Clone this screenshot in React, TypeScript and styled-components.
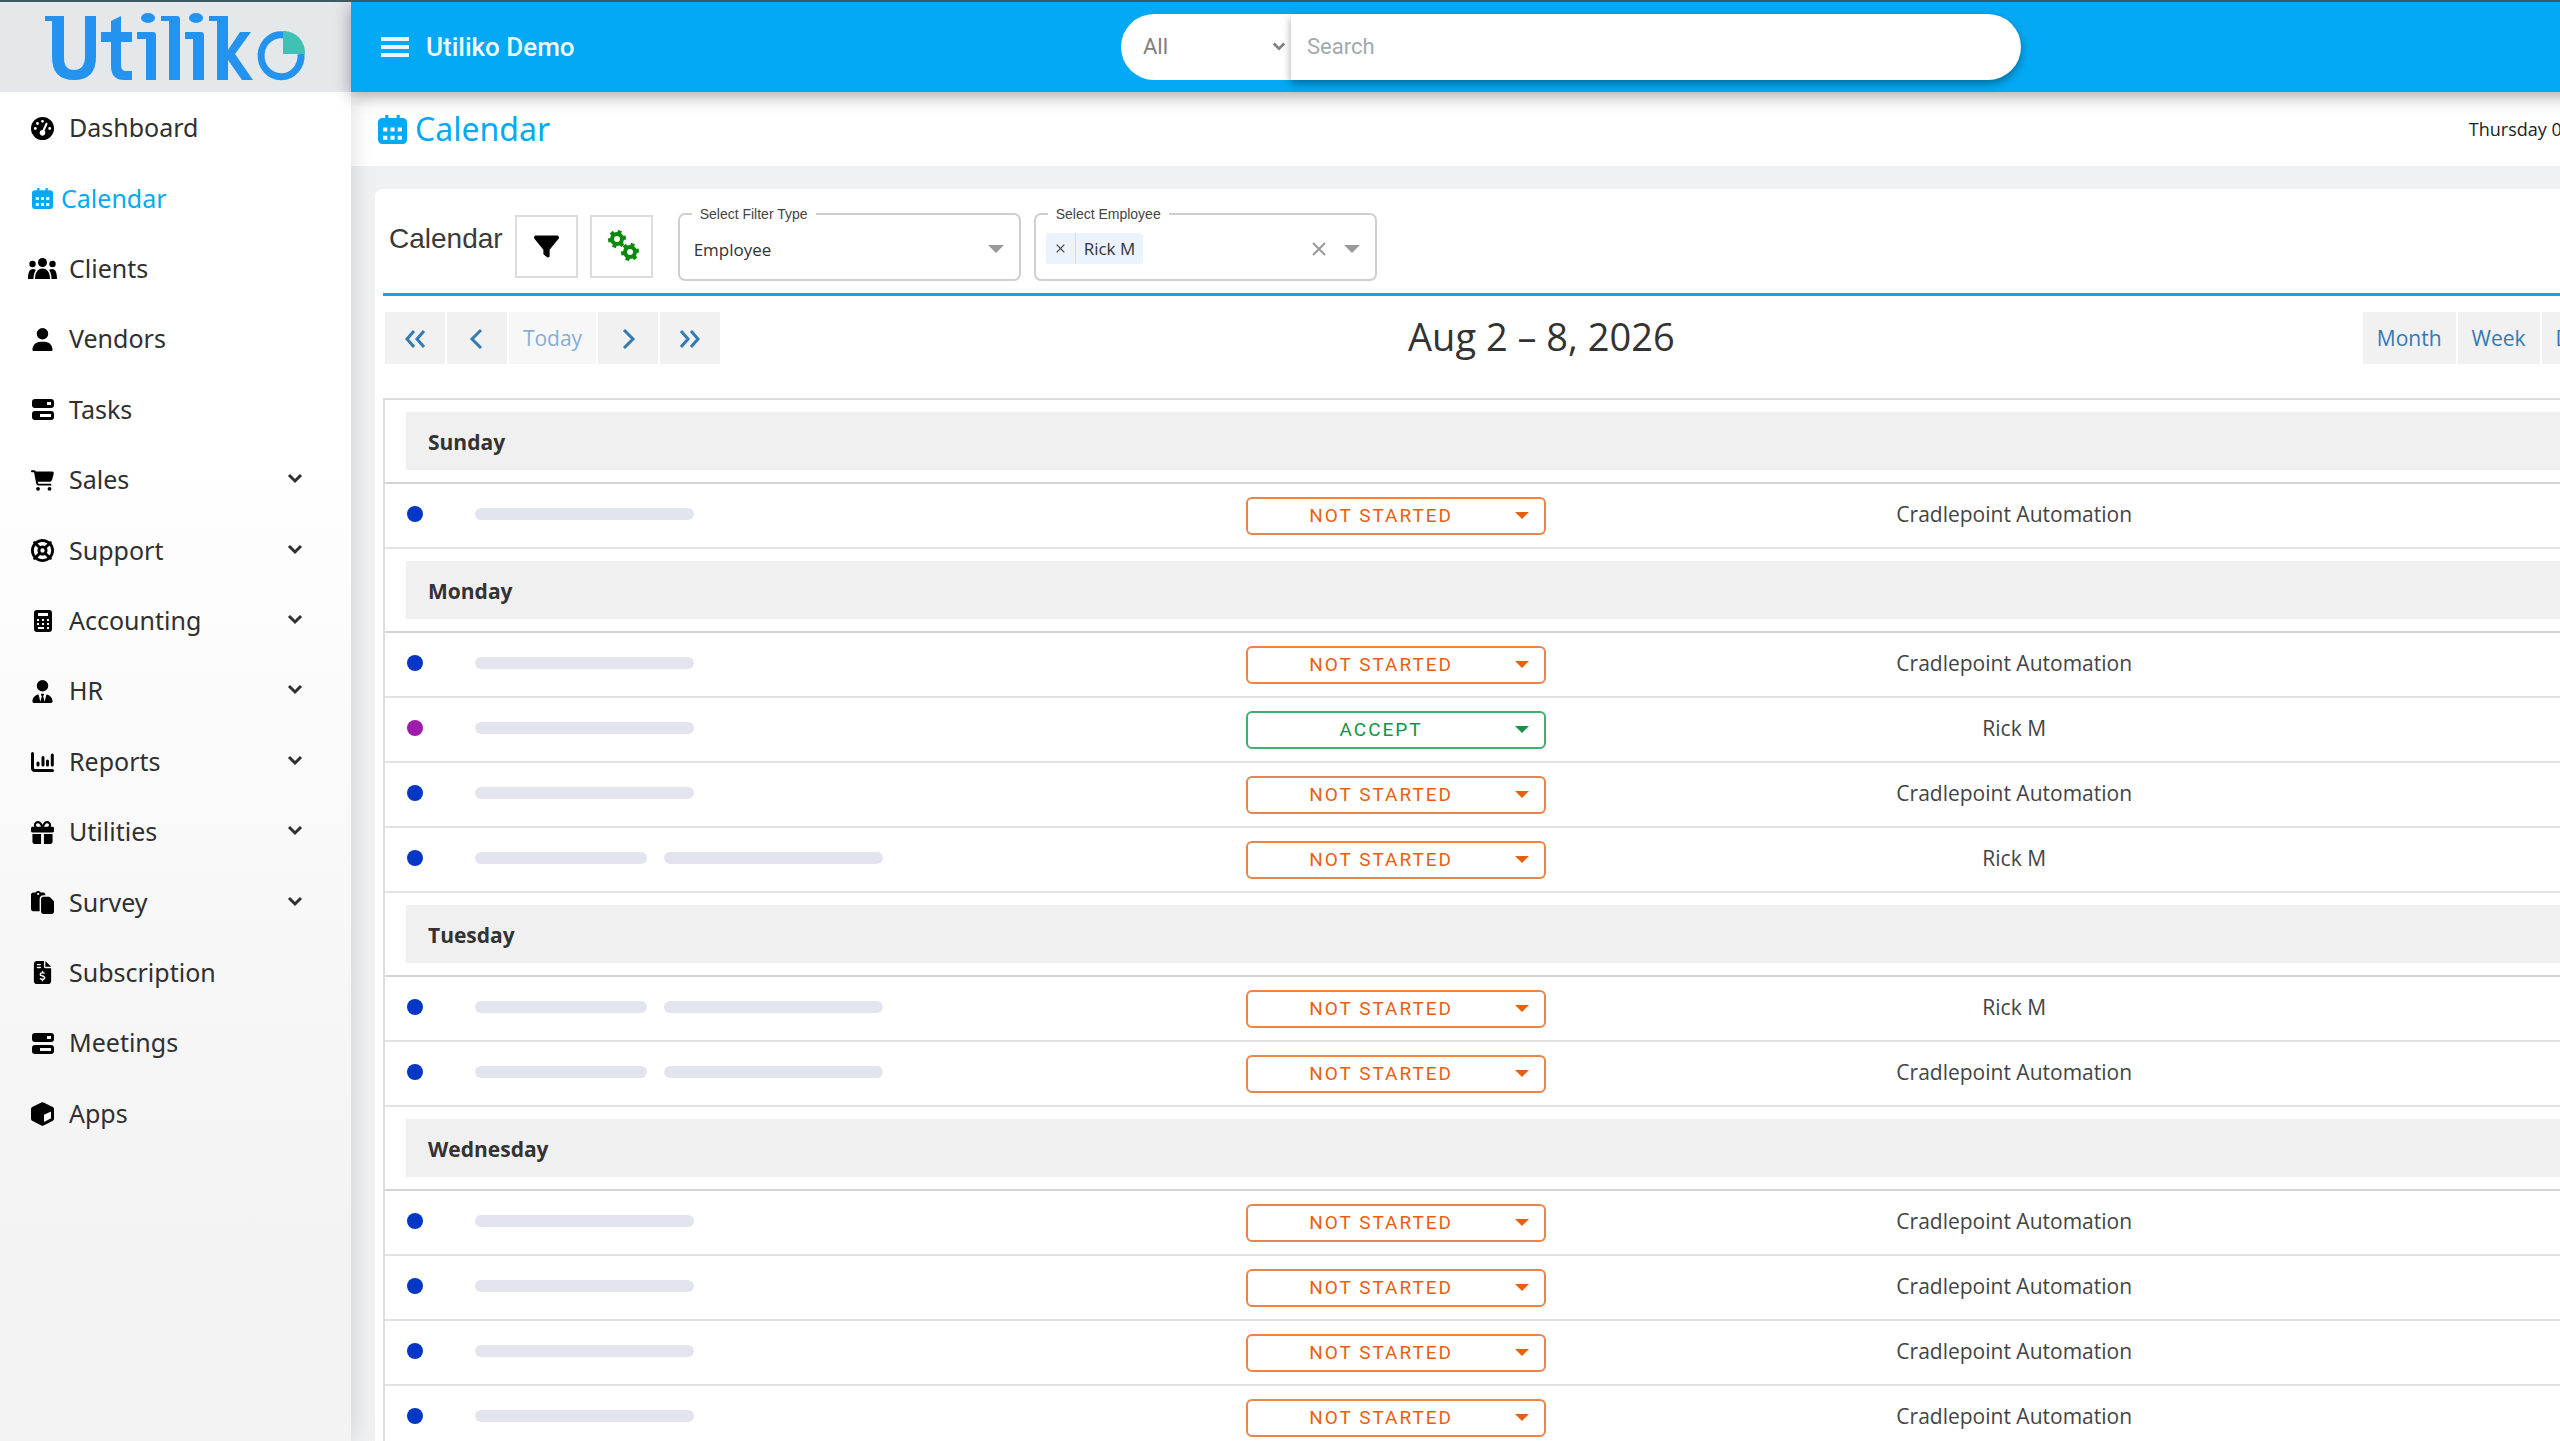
import React from "react";
import styled, { createGlobalStyle, css } from "styled-components";
import {
  FaGaugeHigh,
  FaUser,
  FaCartShopping,
  FaLifeRing,
  FaUserTie,
  FaGift,
  FaPaste,
  FaFileInvoiceDollar,
  FaFilter,
} from "react-icons/fa6";
import type { IconType } from "react-icons";

const uiFont = '"Noto Sans", "Open Sans", sans-serif';
const bodyFont = '"Open Sans", "Noto Sans", sans-serif';
const robotoFont = 'Roboto, "Liberation Sans", sans-serif';
const arialFont = '"Liberation Sans", Arial, sans-serif';
const blue = "#03a9f4";

const GlobalStyle = createGlobalStyle`
  *, *::before, *::after { box-sizing: border-box; }
  body { margin: 0; background: #eff1f3; overflow: hidden; }
  button, input, select { font: inherit; color: inherit; margin: 0; }
  button { cursor: pointer; }
`;

const Shell = styled.div`
  display: flex;
  height: 100vh;
  overflow: hidden;
  border-top: 2px solid #3c5c62;
  font-family: ${bodyFont};
  color: #333;
`;

const Sidebar = styled.aside`
  flex: 0 0 351px;
  display: flex;
  flex-direction: column;
  background: linear-gradient(#fff 30%, #f3f3f3 85%);
  box-shadow: 0 0 24px rgba(0, 0, 0, 0.14);
  z-index: 1;
`;

const Brand = styled.a`
  display: flex;
  align-items: center;
  height: 90px;
  padding-left: 44px;
  background: #e5e8eb;
`;

const MenuList = styled.ul`
  display: grid;
  grid-auto-rows: 1fr;
  height: 1056px;
  list-style: none;
  margin: 0;
  padding: 0;
`;

const MenuLink = styled.a<{ $active?: boolean }>`
  display: grid;
  grid-template-columns: ${(p) => (p.$active ? "25px" : "25px")} 1fr 24px;
  column-gap: ${(p) => (p.$active ? "6px" : "14px")};
  align-items: center;
  height: 100%;
  padding: 0 40px 0 30px;
  font: 400 25px/34px ${uiFont};
  color: ${(p) => (p.$active ? blue : "#303030")};
  text-decoration: none;
`;

const MenuIcon = styled.span<{ $active?: boolean }>`
  display: flex;
  justify-content: center;
  padding-top: 2px;
  font-size: ${(p) => (p.$active ? "21px" : "23px")};
  color: ${(p) => (p.$active ? blue : "#000")};
  svg {
    flex: none;
  }
`;

const Main = styled.main`
  flex: 0 0 calc(100% - 283px);
  display: flex;
  flex-direction: column;
`;

const TopBar = styled.header`
  position: relative;
  z-index: 1;
  flex: 0 0 90px;
  display: flex;
  align-items: center;
  padding-left: 30px;
  background: ${blue};
  color: #fff;
  box-shadow: 0 4px 16px rgba(0, 0, 0, 0.35);
`;

const MenuToggle = styled.button`
  display: flex;
  padding: 0;
  border: 0;
  background: none;
  color: #e8f7ff;
`;

const Company = styled.div`
  flex: 0 0 712px;
  padding-left: 17px;
  font: 500 26px/34px ${robotoFont};
  color: #eefaff;
`;

const SearchBox = styled.form`
  display: flex;
  width: 900px;
  height: 66px;
  font: 400 22px/28px ${robotoFont};
`;

const ScopeWrap = styled.div`
  position: relative;
  flex: 0 0 170px;
  display: flex;
  align-items: center;
  background: #fff;
  border-radius: 33px 0 0 33px;
  color: #808080;
  svg {
    position: absolute;
    right: 5px;
    pointer-events: none;
  }
`;

const Scope = styled.select`
  appearance: none;
  width: 100%;
  height: 100%;
  padding: 0 22px;
  border: 0;
  background: none;
`;

const SearchInput = styled.input`
  position: relative;
  flex: 1;
  min-width: 0;
  padding: 0 16px;
  border: 0;
  border-radius: 0 33px 33px 0;
  background: #fff;
  box-shadow: 0 4px 8px rgba(0, 0, 0, 0.35);
  &::placeholder {
    color: #a3a9ae;
    opacity: 1;
  }
`;

const TitleBar = styled.div`
  flex: 0 0 74px;
  display: flex;
  align-items: center;
  justify-content: space-between;
  padding: 0 56px 0 27px;
  background: #fff;
`;

const PageTitle = styled.h1`
  display: flex;
  align-items: center;
  gap: 8px;
  margin: 0;
  font: 400 32px/40px ${uiFont};
  color: ${blue};
`;

const Today = styled.time`
  font: 400 18px/28px ${bodyFont};
  color: #222;
`;

const Card = styled.section`
  flex: 1;
  margin: 23px 0 0 24px;
  padding: 23px 0 0 8px;
  border-radius: 8px 0 0 0;
  background: #fff;
`;

const FilterBar = styled.div`
  display: flex;
  align-items: center;
  height: 84px;
  padding: 0 0 12px 6px;
  border-bottom: 3px solid #1ba1e6;
`;

const SectionName = styled.h2`
  margin: 0 12px 0 0;
  padding-bottom: 15px;
  font: 400 28px/34px ${arialFont};
  color: #3a3a3a;
`;

const SquareButton = styled.button<{ $color: string }>`
  display: flex;
  align-items: center;
  justify-content: center;
  width: 63px;
  height: 63px;
  margin-right: 12px;
  padding: 0;
  border: 2px solid #dcdcdc;
  background: #fff;
  color: ${(p) => p.$color};
`;

const Outlined = styled.fieldset`
  display: flex;
  align-items: center;
  position: relative;
  width: 343px;
  height: 76px;
  margin: 0 13px 8px 0;
  padding: 0 15px 4px 10px;
  border: 2px solid #cfcfcf;
  border-radius: 7px;
  font: 400 17px/26px ${bodyFont};
  color: #999;
  &:first-of-type {
    margin-left: 13px;
  }
`;

const OutlinedLegend = styled.legend`
  margin-left: 2px;
  padding: 0 8px;
  font: 400 14px/18px ${arialFont};
  color: #444;
`;

const FilterSelect = styled.select`
  appearance: none;
  flex: 1;
  min-width: 0;
  padding: 2px 4px 0;
  border: 0;
  background: none;
  color: #333;
`;

const Chip = styled.span`
  display: flex;
  height: 31px;
  border-radius: 3px;
  background: #ebf3ff;
  font: 400 17px/31px ${bodyFont};
  color: #333;
`;

const ChipRemove = styled.button`
  display: flex;
  align-items: center;
  justify-content: center;
  width: 30px;
  padding: 0;
  border: 0;
  border-right: 1px solid #c2e0ff;
  background: none;
  color: #444;
`;

const ChipLabel = styled.span`
  padding: 0 8px;
`;

const ClearButton = styled.button`
  display: flex;
  margin-left: auto;
  margin-right: 18px;
  padding: 0;
  border: 0;
  background: none;
  color: #999;
`;

const CalendarBar = styled.div`
  display: flex;
  align-items: center;
  justify-content: space-between;
  height: 102px;
  padding: 0 21px 19px 2px;
`;

const ButtonGroup = styled.div`
  display: flex;
  gap: 2px;
`;

const groupButton = css`
  height: 52px;
  border: 0;
  background: #f1f1f1;
  color: #337ab7;
  font: 400 21px/28px ${bodyFont};
`;

const NavButton = styled.button`
  ${groupButton}
  display: flex;
  align-items: center;
  justify-content: center;
  width: 60px;
  padding: 0;
`;

const TodayButton = styled.button`
  ${groupButton}
  width: 87px;
  padding: 0;
  background: #f7f7f7;
  color: #85afd4;
`;

const ViewButton = styled.button`
  ${groupButton}
  padding: 0 14px;
`;

const RangeTitle = styled.h2`
  margin: 0;
  padding-bottom: 4px;
  font: 400 38px/50px ${bodyFont};
  color: #333;
`;

const Agenda = styled.table`
  width: 100%;
  table-layout: fixed;
  border-collapse: separate;
  border-spacing: 0;
  border: solid #ddd;
  border-width: 2px 0 0 2px;
`;

const DayCell = styled.th`
  height: 84px;
  padding: 0 0 0 21px;
  border-bottom: 2px solid #d3d3d3;
  text-align: left;
`;

const DayBand = styled.div`
  height: 58px;
  padding-left: 22px;
  background: #f0f0f0;
  font: 700 21px/60px ${bodyFont};
  color: #333;
`;

const Cell = styled.td<{ $align?: "center"; $inset?: boolean }>`
  height: 65px;
  padding: 0 0 0 ${(p) => (p.$inset ? "8px" : "0")};
  border-bottom: 2px solid #e2e2e2;
  vertical-align: middle;
  text-align: ${(p) => p.$align ?? "left"};
  font: 400 21px/28px ${bodyFont};
  color: #444;
`;

const Dot = styled.span<{ $color: string }>`
  display: block;
  width: 16px;
  height: 16px;
  margin: 0 0 4px 22px;
  border-radius: 50%;
  background: ${(p) => p.$color};
`;

const Redacted = styled.div`
  display: flex;
  gap: 17px;
  padding-bottom: 4px;
`;

const Bar = styled.span<{ $short?: boolean }>`
  width: ${(p) => (p.$short ? 172 : 219)}px;
  height: 12px;
  border-radius: 6px;
  background: #e3e5ee;
`;

const StatusButton = styled.button<{ $accept?: boolean }>`
  display: flex;
  align-items: center;
  width: 300px;
  height: 38px;
  padding: 0 15px 0 0;
  border: 2px solid ${(p) => (p.$accept ? "#3fae70" : "#ed8348")};
  border-radius: 6px;
  background: #fff;
  color: ${(p) => (p.$accept ? "#119447" : "#e8600f")};
  font: 400 19px/34px ${robotoFont};
  letter-spacing: 2px;
`;

const StatusLabel = styled.span`
  flex: 1;
`;

const Employee = styled.div`
  padding-bottom: 3px;
`;

function CubeIcon() {
  return (
    <svg width="23" height="24" viewBox="0 0 23 24" aria-hidden="true">
      <path d="M10.4.5q1.1-.6 2.2 0l9.2 4.6q1.2.7 1.2 2v9.6q0 1.3-1.2 2l-9.2 4.8q-1.1.6-2.2 0L1.2 18.700q-1.200-.7-1.200-2V7.100q0-1.300 1.200-2z" fill="currentColor" />
      <path d="M13 12.800l6.500-3q.5 0 .5.600v5.800l-6.500 3.600q-.5 0-.5-.6z" fill="#fff" />
    </svg>
  );
}

function TaskStackIcon() {
  return (
    <svg width="22" height="21" viewBox="0 0 22 21" aria-hidden="true">
      <path
        fillRule="evenodd"
        fill="currentColor"
        d="M3 0h16a3 3 0 0 1 3 3v3a3 3 0 0 1-3 3H3a3 3 0 0 1-3-3V3a3 3 0 0 1 3-3zm12 3v3h4V3zM3 12h16a3 3 0 0 1 3 3v3a3 3 0 0 1-3 3H3a3 3 0 0 1-3-3v-3a3 3 0 0 1 3-3zm5 3v3h11v-3z"
      />
    </svg>
  );
}

function CalendarIcon({ size = 21 }: { size?: number }) {
  return (
    <svg width={size} height={size} viewBox="0 0 28 28" aria-hidden="true">
      <path
        fillRule="evenodd"
        fill="currentColor"
        d="M7 0h3v3h8V0h3v3h3a4 4 0 0 1 4 4v17a4 4 0 0 1-4 4H4a4 4 0 0 1-4-4V7a4 4 0 0 1 4-4h3zM5 12v4h4v-4zm7 0v4h4v-4zm7 0v4h4v-4zM5 20v4h4v-4zm7 0v4h4v-4zm7 0v4h4v-4z"
      />
    </svg>
  );
}

function PeopleIcon() {
  return (
    <svg width="29" height="21" viewBox="0 0 29 21" fill="currentColor" aria-hidden="true">
      <circle cx="14.5" cy="4.500" r="4.500" />
      <circle cx="4.500" cy="6" r="3.200" />
      <circle cx="24.500" cy="6" r="3.200" />
      <path d="M7 21c0-6 2.500-10.500 7.500-10.500S22 15 22 21z" />
      <path d="M0 21c0-6 1.200-10 5-10 1.200 0 2.100.3 2.800 1C6.300 14.500 5.500 17.500 5.500 21zM29 21c0-6-1.200-10-5-10-1.200 0-2.100.3-2.800 1 1.500 2.500 2.300 5.500 2.300 9z" />
    </svg>
  );
}

function CalculatorIcon() {
  return (
    <svg width="18" height="22" viewBox="0 0 18 22" aria-hidden="true">
      <path
        fillRule="evenodd"
        fill="currentColor"
        d="M3 0h12a3 3 0 0 1 3 3v16a3 3 0 0 1-3 3H3a3 3 0 0 1-3-3V3a3 3 0 0 1 3-3zm1 3v3h10V3zM3 9v2h2V9zm5 0v2h2V9zm5 0v2h2V9zM3 13v2h2v-2zm5 0v2h2v-2zm5 0v2h2v-2zM4 17v2h6v-2zm9 0v2h2v-2z"
      />
    </svg>
  );
}

function ReportsIcon() {
  return (
    <svg width="23" height="20" viewBox="0 0 23 20" fill="none" stroke="currentColor" strokeWidth="3" strokeLinecap="round" aria-hidden="true">
      <path d="M1.500 1.500V16q0 2.500 2.500 2.500H21.500M7 11v2M12 5.500V13M16.500 9v4M21.300 3V13" />
    </svg>
  );
}

function Chevron({ size = 16, width = 3 }: { size?: number; width?: number }) {
  return (
    <svg width={size} height={size} viewBox="0 0 16 16" fill="none" stroke="currentColor" strokeWidth={width} aria-hidden="true">
      <path d="M2 4l6 6 6-6" />
    </svg>
  );
}

function Caret({ width = 14 }: { width?: number }) {
  return (
    <svg width={width} height={width / 2} viewBox="0 0 14 7" aria-hidden="true">
      <path d="M0 0h14L7 7z" fill="currentColor" />
    </svg>
  );
}

function Cross({ size, width }: { size: number; width: number }) {
  return (
    <svg width={size} height={size} viewBox="0 0 14 14" stroke="currentColor" strokeWidth={width} aria-hidden="true">
      <path d="M1 1l12 12M13 1L1 13" />
    </svg>
  );
}

const arrows = {
  first: "M10 4L3 12l7 8M20 4l-7 8 7 8",
  prev: "M15 3L6 12l9 9",
  next: "M7 3l9 9-9 9",
  last: "M2 4l7 8-7 8M12 4l7 8-7 8",
};

function Arrow({ kind }: { kind: keyof typeof arrows }) {
  return (
    <svg width="22" height="22" viewBox="0 0 22 22" fill="none" stroke="currentColor" strokeWidth="3" aria-hidden="true">
      <path d={arrows[kind]} />
    </svg>
  );
}

const gearTeeth = [0, 60, 120, 180, 240, 300];

function Gear({ cx, cy }: { cx: number; cy: number }) {
  return (
    <g transform={`translate(${cx} ${cy})`}>
      <circle r="5" fill="none" stroke="currentColor" strokeWidth="4" />
      {gearTeeth.map((a) => (
        <rect key={a} x="-2" y="-9" width="4" height="5" fill="currentColor" transform={`rotate(${a + 20})`} />
      ))}
    </g>
  );
}

function Gears() {
  return (
    <svg width="38" height="34" viewBox="-6 0 38 34" aria-hidden="true">
      <Gear cx={9} cy={9} />
      <Gear cx={22} cy={22} />
    </svg>
  );
}

function Logo() {
  return (
    <svg width="262" height="68" viewBox="0 0 262 68" role="img" aria-label="Utiliko">
      <g fill="#2492ef">
        <path d="M1 3H20V45Q20 57 30 57T41 45V3H52V44Q52 67 30 67T8 44V8H1z" />
        <path d="M67 8L77 3V19H88V29H77V52Q77 58 82 58H88V67H80Q67 67 67 53V29H57V19H67z" />
        <path d="M93 19H109Q112 19 112 22V67H102V26H93z" />
        <path d="M117 3H133Q136 3 136 6V67H125V8H117z" />
        <path d="M141 19H157Q160 19 160 22V67H149V26H141z" />
        <path d="M165 3H184V37L196 19H207L191 41L209 67H198L184 47V67H173V8H165z" />
        <ellipse cx="104" cy="5" rx="7" ry="5" />
        <ellipse cx="152" cy="5" rx="7" ry="5" />
      </g>
      <path d="M240 22A20 21 0 1 0 257 41" fill="none" stroke="#2492ef" strokeWidth="7" />
      <path d="M239 18H240A21 22 0 0 1 261 41H239z" fill="#3fc1b5" />
    </svg>
  );
}

type MenuEntry = { label: string; icon: IconType | React.FC; active?: boolean; expandable?: boolean };

const menu: MenuEntry[] = [
  { label: "Dashboard", icon: FaGaugeHigh },
  { label: "Calendar", icon: CalendarIcon, active: true },
  { label: "Clients", icon: PeopleIcon },
  { label: "Vendors", icon: FaUser },
  { label: "Tasks", icon: TaskStackIcon },
  { label: "Sales", icon: FaCartShopping, expandable: true },
  { label: "Support", icon: FaLifeRing, expandable: true },
  { label: "Accounting", icon: CalculatorIcon, expandable: true },
  { label: "HR", icon: FaUserTie, expandable: true },
  { label: "Reports", icon: ReportsIcon, expandable: true },
  { label: "Utilities", icon: FaGift, expandable: true },
  { label: "Survey", icon: FaPaste, expandable: true },
  { label: "Subscription", icon: FaFileInvoiceDollar },
  { label: "Meetings", icon: TaskStackIcon },
  { label: "Apps", icon: CubeIcon },
];

type Task = { who: string; accept?: boolean; wide?: boolean };
const cradle = "Cradlepoint Automation";
const rick = "Rick M";

const days: { day: string; tasks: Task[] }[] = [
  { day: "Sunday", tasks: [{ who: cradle }] },
  {
    day: "Monday",
    tasks: [{ who: cradle }, { who: rick, accept: true }, { who: cradle }, { who: rick, wide: true }],
  },
  { day: "Tuesday", tasks: [{ who: rick, wide: true }, { who: cradle, wide: true }] },
  { day: "Wednesday", tasks: [{ who: cradle }, { who: cradle }, { who: cradle }, { who: cradle }] },
];

function TaskRow({ task }: { task: Task }) {
  return (
    <tr>
      <Cell>
        <Dot $color={task.accept ? "#a01bab" : "#0437c5"} />
      </Cell>
      <Cell>
        <Redacted>
          {task.wide && <Bar $short />}
          <Bar />
        </Redacted>
      </Cell>
      <Cell $inset>
        <StatusButton $accept={task.accept}>
          <StatusLabel>{task.accept ? "ACCEPT" : "NOT STARTED"}</StatusLabel>
          <Caret />
        </StatusButton>
      </Cell>
      <Cell $align="center">
        <Employee>{task.who}</Employee>
      </Cell>
      <Cell />
    </tr>
  );
}

export default function App() {
  return (
    <>
      <GlobalStyle />
      <Shell>
        <Sidebar>
          <Brand href="#home">
            <Logo />
          </Brand>
          <nav>
            <MenuList>
              {menu.map(({ label, icon: Icon, active, expandable }) => (
                <li key={label}>
                  <MenuLink href={`#${label.toLowerCase()}`} $active={active}>
                    <MenuIcon $active={active}>
                      <Icon />
                    </MenuIcon>
                    {label}
                    {expandable && <Chevron />}
                  </MenuLink>
                </li>
              ))}
            </MenuList>
          </nav>
        </Sidebar>
        <Main>
          <TopBar>
            <MenuToggle aria-label="Toggle menu">
              <svg width="28" height="20" viewBox="0 0 28 20" stroke="currentColor" strokeWidth="4" aria-hidden="true">
                <path d="M0 2h28M0 10h28M0 18h28" />
              </svg>
            </MenuToggle>
            <Company>Utiliko Demo</Company>
            <SearchBox>
              <ScopeWrap>
                <Scope aria-label="Search scope">
                  <option>All</option>
                </Scope>
                <Chevron size={14} />
              </ScopeWrap>
              <SearchInput type="search" placeholder="Search" aria-label="Search" />
            </SearchBox>
          </TopBar>
          <TitleBar>
            <PageTitle>
              <CalendarIcon size={29} />
              Calendar
            </PageTitle>
            <Today>Thursday 06</Today>
          </TitleBar>
          <Card>
            <FilterBar>
              <SectionName>Calendar</SectionName>
              <SquareButton $color="#000" aria-label="Filter">
                <FaFilter size={25} />
              </SquareButton>
              <SquareButton $color="#0a8a0a" aria-label="Settings">
                <Gears />
              </SquareButton>
              <Outlined>
                <OutlinedLegend>Select Filter Type</OutlinedLegend>
                <FilterSelect aria-label="Select Filter Type">
                  <option>Employee</option>
                </FilterSelect>
                <Caret width={16} />
              </Outlined>
              <Outlined>
                <OutlinedLegend>Select Employee</OutlinedLegend>
                <Chip>
                  <ChipRemove aria-label="Remove Rick M">
                    <Cross size={9} width={2} />
                  </ChipRemove>
                  <ChipLabel>Rick M</ChipLabel>
                </Chip>
                <ClearButton aria-label="Clear">
                  <Cross size={14} width={2} />
                </ClearButton>
                <Caret width={16} />
              </Outlined>
            </FilterBar>
            <CalendarBar>
              <ButtonGroup>
                <NavButton aria-label="Previous year"><Arrow kind="first" /></NavButton>
                <NavButton aria-label="Previous"><Arrow kind="prev" /></NavButton>
                <TodayButton>Today</TodayButton>
                <NavButton aria-label="Next"><Arrow kind="next" /></NavButton>
                <NavButton aria-label="Next year"><Arrow kind="last" /></NavButton>
              </ButtonGroup>
              <RangeTitle>Aug 2 – 8, 2026</RangeTitle>
              <ButtonGroup>
                <ViewButton>Month</ViewButton>
                <ViewButton>Week</ViewButton>
                <ViewButton>Day</ViewButton>
              </ButtonGroup>
            </CalendarBar>
            <Agenda>
              <colgroup>
                <col width="90" />
                <col width="34%" />
                <col width="328" />
                <col width="40%" />
                <col />
              </colgroup>
              {days.map(({ day, tasks }) => (
                <tbody key={day}>
                  <tr>
                    <DayCell colSpan={5}>
                      <DayBand>{day}</DayBand>
                    </DayCell>
                  </tr>
                  {tasks.map((task, i) => (
                    <TaskRow key={i} task={task} />
                  ))}
                </tbody>
              ))}
            </Agenda>
          </Card>
        </Main>
      </Shell>
    </>
  );
}
